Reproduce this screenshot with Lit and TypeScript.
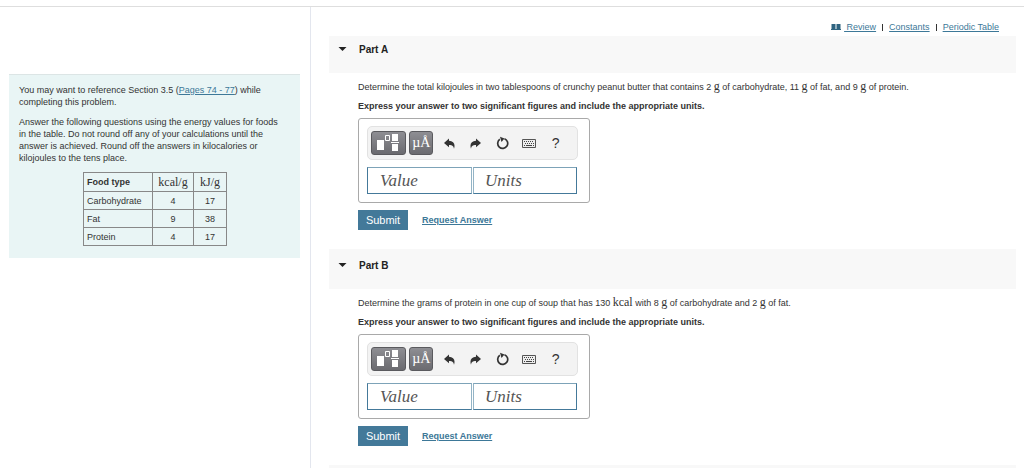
import { LitElement, html, css, svg } from "lit";
import { customElement, property } from "lit/decorators.js";

const shared = css`
  *, *::before, *::after { box-sizing: border-box; }
  :host { display: block; }
  p { margin: 0; }
  a { color: #3d7898; }
  .math { font-family: "Liberation Serif", serif; font-size: 12px; line-height: 1px; }
`;

@customElement("answer-box")
class AnswerBox extends LitElement {
  @property() part = "";

  static styles = [shared, css`
    .box {
      width: 232px;
      padding: 7px 11px 8px 8px;
      border: 1px solid #a9a9a9;
      border-radius: 3px;
    }
    .toolbar {
      display: flex;
      align-items: center;
      height: 34px;
      padding: 0 8px 0 3px;
      background: #f3f3f3;
      border: 1px solid #e2e2e2;
      border-radius: 5px;
    }
    button { font: inherit; padding: 0; border: 0; background: none; }
    .dark {
      display: grid;
      place-items: center;
      height: 24px;
      border: 1px solid #5a5a5e;
      border-radius: 3px;
      background: linear-gradient(#8e8e93, #6b6b70);
      color: #fff;
    }
    .templates { width: 36px; margin-right: 3px; }
    .symbols { width: 24px; font: 14px/20px "Liberation Serif", serif; }
    .tool { display: grid; place-items: center; width: 27px; height: 24px; color: #333; }
    .first { margin-left: 3px; }
    .help { font-size: 14px; }
    svg { display: block; }
    .fields { display: grid; grid-template-columns: 105px 104px; gap: 1px; margin-top: 7px; }
    input {
      width: 100%;
      min-width: 0;
      height: 27px;
      padding: 0 12px;
      border: 1px solid #44799a;
      border-radius: 0;
      background: #fff;
      font: italic 17px/24px "Liberation Serif", serif;
      color: #555;
    }
    .value { border-right-color: #93b4c6; border-top-color: #7da3b8; }
    .units { border-left-color: #93b4c6; border-top-color: #7da3b8; padding-left: 11px; }
    input::placeholder { color: #555; opacity: 1; }
    .actions { display: flex; align-items: center; gap: 14px; margin-top: 7px; }
    .submit {
      width: 50px;
      height: 20px;
      background: #437999;
      color: #fff;
      font-size: 11px;
      line-height: 20px;
    }
    .request { font-size: 9px; font-weight: bold; line-height: 12px; }
  `];

  render() {
    const undo = svg`<path d="M0 5 5 .5v2.300c4.500.2 6.600 3.200 5 8C9.600 8 8.500 6.900 5 6.900v2.300z" fill="currentColor"/>`;
    return html`
      <form class="box" @submit=${(e: Event) => e.preventDefault()}>
        <div class="toolbar" role="toolbar">
          <button class="dark templates" type="button" aria-label="Templates">
            <svg width="24" height="18" viewBox="0 0 24 18">
              <path d="M0 6h7v10H0zM15 0h6v7h-6zM15 10h6v7h-6zM14 8h8v1h-8z" fill="#fff"/>
              <path d="M8.500 1.500h4v5h-4z" fill="none" stroke="#fff"/>
            </svg>
          </button>
          <button class="dark symbols" type="button" aria-label="Symbols">µÅ</button>
          <button class="tool first" type="button" aria-label="Undo">
            <svg width="11" height="11" viewBox="0 0 11 11">${undo}</svg>
          </button>
          <button class="tool" type="button" aria-label="Redo">
            <svg width="11" height="11" viewBox="0 0 11 11"><g transform="matrix(-1 0 0 1 11 0)">${undo}</g></svg>
          </button>
          <button class="tool" type="button" aria-label="Reset">
            <svg width="13" height="14" viewBox="0 0 13 14">
              <path d="M3.800 3.300A5 5 0 1 0 8.500 2.700" fill="none" stroke="currentColor" stroke-width="1.700"/>
              <path d="M4 .8 8.500 2.600 5.500 5.900z" fill="currentColor"/>
            </svg>
          </button>
          <button class="tool" type="button" aria-label="Keyboard">
            <svg width="15" height="9" viewBox="0 0 15 9">
              <path d="M.5.500h13v8H.500z" fill="#eee" stroke="#555"/>
              <path d="M2 2.500h10M3 4.500h9" stroke="#444" stroke-dasharray="1 1"/>
              <path d="M2 6.500h1M4 6.500h6M11 6.500h1" stroke="#444"/>
            </svg>
          </button>
          <button class="tool help" type="button" aria-label="Help">?</button>
        </div>
        <div class="fields">
          <input class="value" type="text" placeholder="Value" aria-label=${`Part ${this.part} value`}>
          <input class="units" type="text" placeholder="Units" aria-label=${`Part ${this.part} units`}>
        </div>
      </form>
      <div class="actions">
        <button class="submit" type="button">Submit</button>
        <a class="request" href="#">Request Answer</a>
      </div>
    `;
  }
}

@customElement("app-root")
class AppRoot extends LitElement {
  static styles = [shared, css`
    :host {
      font-family: "Liberation Sans", Arial, sans-serif;
      font-size: 9px;
      line-height: 12px;
      color: #333;
      background: #fff;
      padding-top: 6px;
    }
    .page {
      display: grid;
      grid-template-columns: 311px minmax(0, 1fr);
      min-height: calc(100vh - 6px);
      border-top: 1px solid #dedede;
    }
    .side { padding: 67px 10px 0 9px; border-right: 1px solid #e3e6ee; }
    .intro {
      padding: 9px 19px 12px 10px;
      border-top: 1px solid #dce5e5;
      background: #e9f5f5;
    }
    .intro p + p { margin-top: 8px; }
    table {
      margin: 8px 0 0 64px;
      border-collapse: collapse;
      border: 1px solid #333;
    }
    th, td {
      height: 18px;
      padding: 0 3px;
      border: 1px solid #888;
      text-align: center;
      line-height: 12px;
    }
    thead th { height: 19px; }
    th:first-child { width: 69px; text-align: left; }
    th:nth-child(2) { width: 41px; }
    th:nth-child(3) { width: 33px; }
    thead th.math { padding: 0 2px; line-height: 12px; }
    tbody th, th.math { font-weight: normal; }
    .main { padding: 14px 8px 0 18px; }
    nav { display: flex; justify-content: flex-end; align-items: center; gap: 6px; padding-right: 17px; line-height: 12px; }
    .review { display: flex; align-items: center; gap: 3px; }
    .bar { width: 1px; height: 7px; background: #333; }
    .head {
      display: flex;
      align-items: flex-start;
      gap: 12px;
      height: 40px;
      padding: 11px 9px;
      background: #f8f8f8;
    }
    nav + section .head { height: 37px; padding-top: 8px; margin-top: 3px; }
    h2 { margin: 0; font-size: 10px; line-height: 12px; color: #222; }
    .head svg { margin-top: 2px; }
    .body { padding: 8px 0 19px 29px; }
    .ask { margin-top: 7px; font-weight: bold; }
    answer-box { margin-top: 6px; }
    .end { height: 3px; background: #f8f8f8; }
  `];

  part(name: string, question: unknown) {
    return html`
      <section>
        <div class="head">
          <svg width="9" height="6" viewBox="0 0 9 6"><path d="M.5 1h8L4.500 5z" fill="#222"/></svg>
          <h2>Part ${name}</h2>
        </div>
        <div class="body">
          <p>${question}</p>
          <p class="ask">Express your answer to two significant figures and include the appropriate units.</p>
          <answer-box .part=${name}></answer-box>
        </div>
      </section>
    `;
  }

  render() {
    const g = html`<span class="math">g</span>`;
    const rows = [["Carbohydrate", 4, 17], ["Fat", 9, 38], ["Protein", 4, 17]];
    return html`
      <div class="page">
        <aside class="side">
          <div class="intro">
            <p>You may want to reference Section 3.5 (<a href="#">Pages 74 - 77</a>) while completing this problem.</p>
            <p>Answer the following questions using the energy values for foods in the table. Do not round off any of your calculations until the answer is achieved. Round off the answers in kilocalories or kilojoules to the tens place.</p>
            <table>
              <thead><tr><th scope="col">Food type</th><th class="math" scope="col">kcal/g</th><th class="math" scope="col">kJ/g</th></tr></thead>
              <tbody>
                ${rows.map(([food, kcal, kj]) => html`<tr><th scope="row">${food}</th><td>${kcal}</td><td>${kj}</td></tr>`)}
              </tbody>
            </table>
          </div>
        </aside>
        <main class="main">
          <nav>
            <span class="review">
              <svg width="10" height="8" viewBox="0 0 10 8"><path d="M.5 1h4v6h-4zM5.500 1h4v6h-4z" fill="#2f6480"/><path d="M0 6.500h10" stroke="#2f6480"/></svg>
              <a href="#">&nbsp;Review</a>
            </span>
            <span class="bar"></span>
            <a href="#">Constants</a>
            <span class="bar"></span>
            <a href="#">Periodic Table</a>
          </nav>
          ${this.part("A", html`Determine the total kilojoules in two tablespoons of crunchy peanut butter that contains 2 ${g} of carbohydrate, 11 ${g} of fat, and 9 ${g} of protein.`)}
          ${this.part("B", html`Determine the grams of protein in one cup of soup that has 130 <span class="math">kcal</span> with 8 ${g} of carbohydrate and 2 ${g} of fat.`)}
          <div class="end"></div>
        </main>
      </div>
    `;
  }
}
